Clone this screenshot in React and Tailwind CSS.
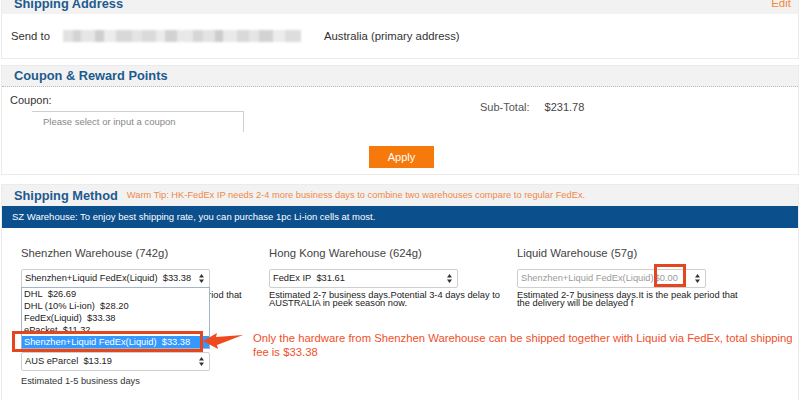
import React from 'react'

const UpDown = () => (
  <svg width="5" height="9" viewBox="0 0 5 9">
    <path d="M2.5 0L5 3.5H0z M2.5 9L0 5.5H5z" fill="#333" />
  </svg>
)

const Select = ({ children, className = '' }) => (
  <div className={`relative h-[19px] w-[189px] border border-[#cfcfcf] rounded-[2px] bg-white flex items-center justify-between pl-[3px] pr-[5px] text-[9.3px] text-[#222] whitespace-nowrap ${className}`}>
    {children}
    <UpDown />
  </div>
)

// blurred-out street address
const blurBlocks = [
  ['#e2e2e2', 10], ['#d4d4d4', 8], ['#e6e6e6', 14], ['#cfcfcf', 9], ['#ececec', 12],
  ['#d8d8d8', 16], ['#e4e4e4', 10], ['#dadada', 14], ['#ebebeb', 9], ['#d2d2d2', 12],
  ['#e8e8e8', 16], ['#d6d6d6', 10], ['#e3e3e3', 12], ['#cccccc', 8], ['#e9e9e9', 14],
  ['#d9d9d9', 12], ['#e5e5e5', 10], ['#d3d3d3', 14], ['#ececec', 12], ['#dddddd', 16],
]

const App = () => {
  return (
    <div className="w-[800px] h-[400px] overflow-hidden bg-white text-[#333] font-['Liberation_Sans',Arial,sans-serif]">
      {/* Shipping Address */}
      <div className="mt-[-8px] mx-[1px] border border-[#ebebeb]">
        <div className="h-[21px] bg-[#f2f2f2] flex items-center justify-between pl-[12px] pr-[7px]">
          <span className="text-[12.8px] font-bold text-[#1d5a8e]">Shipping Address</span>
          <span className="text-[11.5px] text-[#f28a3c]">Edit</span>
        </div>
        <div className="h-[44px] flex items-center pl-[9px] text-[11.3px]">
          <span>Send to</span>
          <div className="ml-[13px] w-[258px] h-[12px] flex blur-[1.2px]">
            {blurBlocks.map(([c, w], i) => (
              <div key={i} className="h-full" style={{ background: c, width: w }} />
            ))}
          </div>
          <span className="ml-[3px]">Australia (primary address)</span>
        </div>
      </div>

      {/* Coupon & Reward Points */}
      <div className="mt-[6px] mx-[1px] border border-[#ebebeb]">
        <div className="h-[21px] bg-[#f2f2f2] flex items-center pl-[12px] border-b border-dotted border-[#bdbdbd]">
          <span className="text-[12.8px] font-bold text-[#1d5a8e]">Coupon &amp; Reward Points</span>
        </div>
        <div className="pb-[6px]">
          <div className="flex">
            <div className="w-[478px] pl-[8px] pt-[7px]">
              <div className="text-[11px] leading-[13px]">Coupon:</div>
              <div className="ml-[22px] mt-[4px] w-[212px] h-[21px] border-t border-r border-[#cfcfcf] flex items-center pl-[11px] text-[9.5px] text-[#888]">
                Please select or input a coupon
              </div>
            </div>
            <div className="pt-[14px] text-[11px] leading-[13px] flex">
              <span className="text-[#555]">Sub-Total:</span>
              <span className="ml-[15px] text-[#444]">$231.78</span>
            </div>
          </div>
          <div className="mt-[14px] flex justify-center pl-[3px]">
            <div className="w-[65px] h-[22px] bg-[#f57a0b] text-white text-[11px] flex items-center justify-center">Apply</div>
          </div>
        </div>
      </div>

      {/* Shipping Method */}
      <div className="mt-[9px] mx-[1px] border-x border-t border-[#ebebeb] h-[220px]">
        <div className="h-[21px] bg-[#f2f2f2] flex items-center pl-[12px]">
          <span className="text-[12.8px] font-bold text-[#1d5a8e]">Shipping Method</span>
          <span className="ml-[9px] text-[9.3px] text-[#f08848]">
            Warm Tip: HK-FedEx IP needs 2-4 more business days to combine two warehouses compare to regular FedEx.
          </span>
        </div>
        <div className="h-[22px] bg-[#0c4f8d] text-white text-[9.5px] flex items-center pl-[10px]">
          SZ Warehouse: To enjoy best shipping rate, you can purchase 1pc Li-ion cells at most.
        </div>

        <div className="relative pt-[19px] pl-[19px] grid grid-cols-[248px_248px_248px]">
          {/* Shenzhen */}
          <div className="relative">
            <div className="text-[11.3px] leading-[13px] text-[#444]">Shenzhen Warehouse (742g)</div>
            <Select className="mt-[9px]">
              <span>Shenzhen+Liquid FedEx(Liquid)&nbsp; $33.38</span>
            </Select>
            <div className="mt-[3px] text-[9.3px] leading-[8px] text-[#222] whitespace-nowrap">
              Estimated 2-7 business days.It is the peak period that<br />the delivery will be delayed f
            </div>
            <Select className="mt-[45px]">
              <span>AUS eParcel&nbsp; $13.19</span>
            </Select>
            <div className="mt-[4px] text-[9.3px] leading-[12px] text-[#333]">Estimated 1-5 business days</div>

            {/* open dropdown list */}
            <div className="absolute left-0 top-[40px] w-[189px] h-[62px] bg-white border border-[#a3b5cc] overflow-hidden text-[9.3px] leading-[12px] text-[#222]">
              <div className="pl-[2px]">DHL&nbsp; $26.69</div>
              <div className="pl-[2px]">DHL (10% Li-ion)&nbsp; $28.20</div>
              <div className="pl-[2px]">FedEx(Liquid)&nbsp; $33.38</div>
              <div className="pl-[2px]">ePacket&nbsp; $11.32</div>
              <div className="pl-[2px] bg-[#3399ff] text-white">Shenzhen+Liquid FedEx(Liquid)&nbsp; $33.38</div>
            </div>
            <div className="absolute left-[-9px] top-[84px] w-[191px] h-[21px] border-[3px] border-[#e4471d]" />
            <svg className="absolute left-[182px] top-[84px]" width="42" height="19" viewBox="0 0 42 19">
              <polygon points="0,10 14,2 13,6 40,4 14,14 15,18" fill="#ef4a1f" />
            </svg>
            <div className="absolute left-[232px] top-[84px] w-[560px] text-[11.3px] leading-[14px] text-[#f0502a] whitespace-nowrap">
              Only the hardware from Shenzhen Warehouse can be shipped together with Liquid via FedEx, total shipping<br />fee is $33.38
            </div>
          </div>

          {/* Hong Kong */}
          <div>
            <div className="text-[11.3px] leading-[13px] text-[#444]">Hong Kong Warehouse (624g)</div>
            <Select className="mt-[9px]">
              <span>FedEx IP&nbsp; $31.61</span>
            </Select>
            <div className="mt-[3px] text-[9.3px] leading-[8px] text-[#222] whitespace-nowrap">
              Estimated 2-7 business days.Potential 3-4 days delay to<br />AUSTRALIA in peek season now.
            </div>
          </div>

          {/* Liquid */}
          <div>
            <div className="text-[11.3px] leading-[13px] text-[#444]">Liquid Warehouse (57g)</div>
            <Select className="mt-[9px]">
              <span className="text-[#9a9a9a]">Shenzhen+Liquid FedEx(Liquid)<span className="ml-[1px]">$0.00</span></span>
              <div className="absolute left-[136px] top-[-6px] w-[32px] h-[23px] border-[3px] border-[#e4471d]" />
            </Select>
            <div className="mt-[3px] text-[9.3px] leading-[8px] text-[#222] whitespace-nowrap">
              Estimated 2-7 business days.It is the peak period that<br />the delivery will be delayed f
            </div>
          </div>
        </div>
      </div>
    </div>
  )
}

export default App
